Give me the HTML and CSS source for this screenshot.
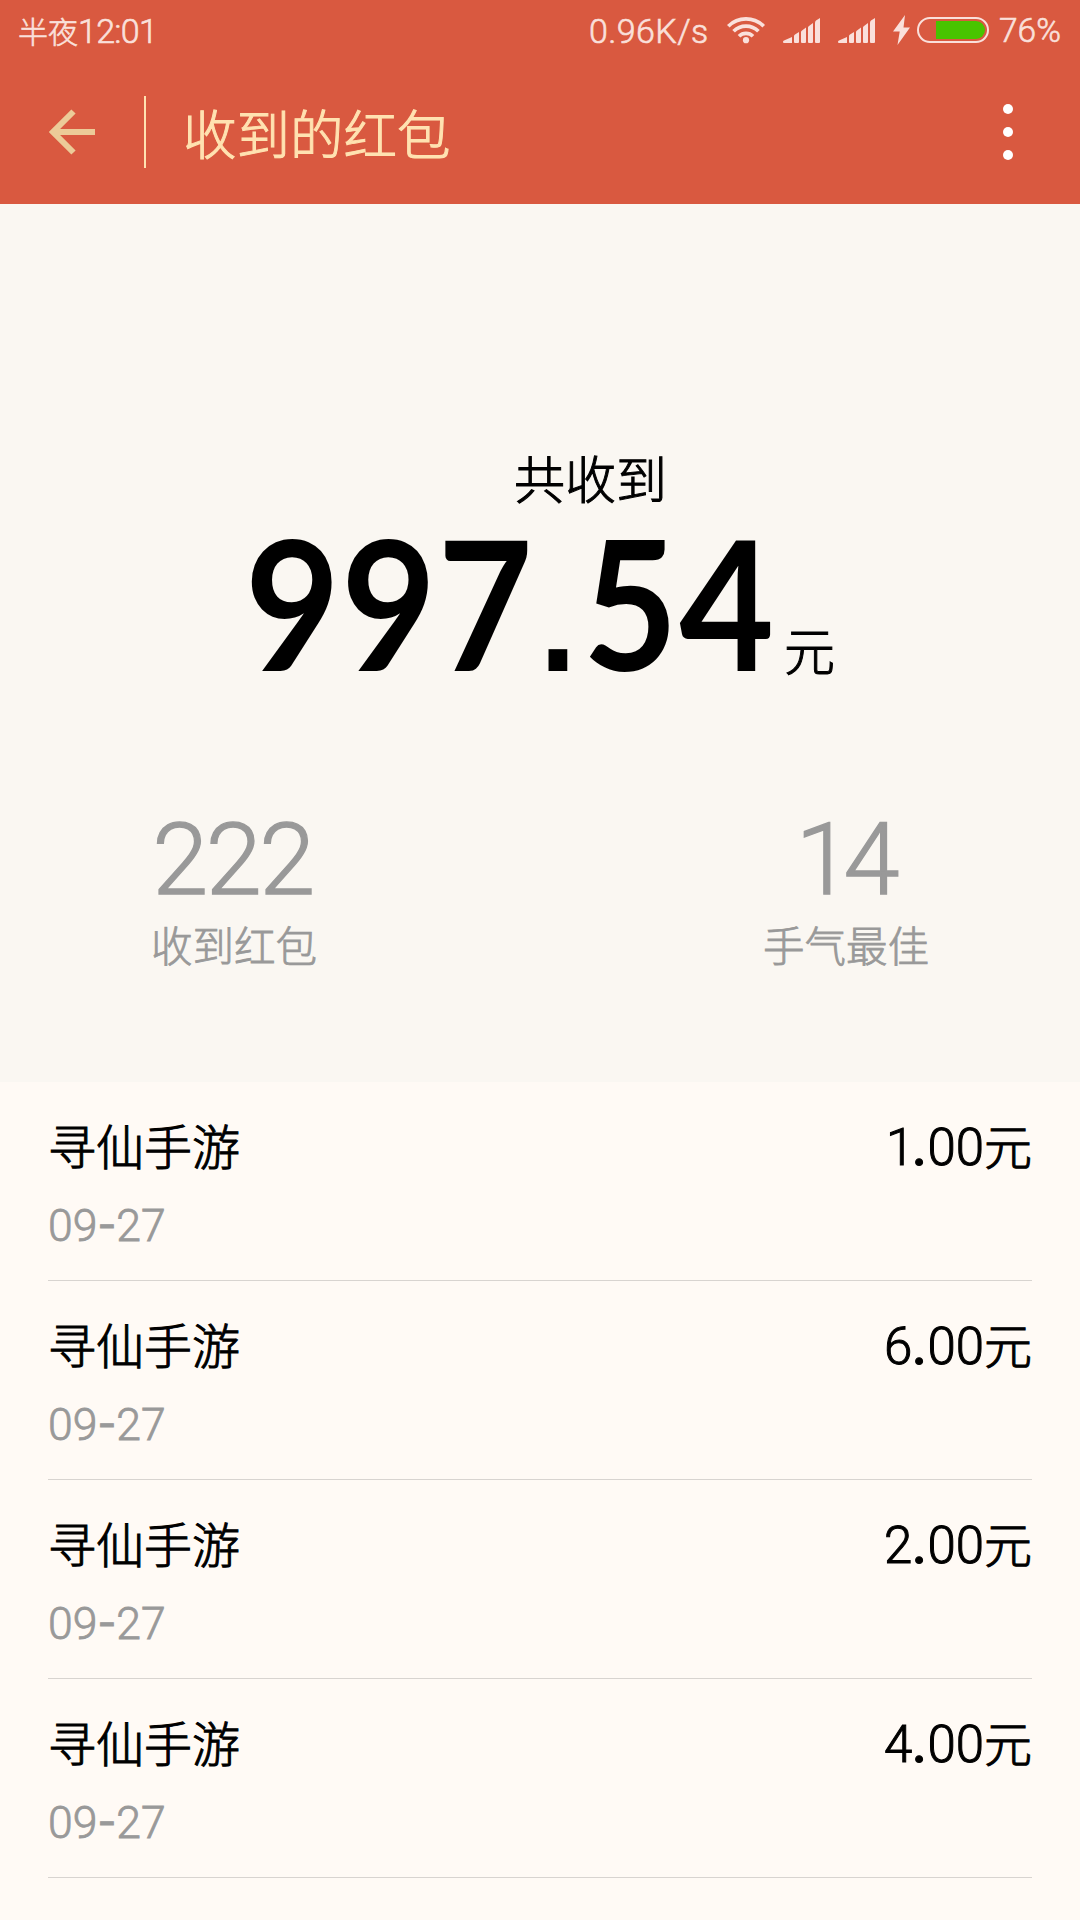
FILE: index.html
```
<!DOCTYPE html>
<html lang="zh-CN">
<head>
<meta charset="utf-8">
<title>收到的红包</title>
<link rel="stylesheet" href="styles.css">
</head>
<body>
<header class="top">
  <div class="status">
    <div class="clock">半夜<span class="clock-digits">12:01</span></div>
    <div class="speed">0.96K/s</div>
    <svg class="wifi" width="38" height="28" viewBox="0 0 38 28" fill="none" stroke="currentColor" stroke-width="3.7">
      <path d="M1.3 10.2a25 25 0 0 1 35.4 0M6.600 15.200a17.500 17.500 0 0 1 24.800 0M12 20.200a10 10 0 0 1 14 0"/>
      <circle cx="19" cy="24.2" r="3.1" fill="currentColor" stroke="none"/>
    </svg>
    <svg class="signal signal-one" width="37" height="25" viewBox="0 0 37 25" fill="currentColor"><path d="M0 24q0-1 1-1.400L9 19v6H1q-1 0-1-1zM11 18q0-1 1-1.500L16 14v10q0 1-1 1h-3q-1 0-1-1zM18 14q0-1 1-1.500L23 9.500v14.500q0 1-1 1h-3q-1 0-1-1zM25 9.500q0-1 1-1.600L30 5v19q0 1-1 1h-3q-1 0-1-1zM32 5q0-2 1-2.600L37 0v24q0 1-1 1h-3q-1 0-1-1z"/></svg>
    <svg class="signal signal-two" width="37" height="25" viewBox="0 0 37 25" fill="currentColor"><path d="M0 24q0-1 1-1.400L9 19v6H1q-1 0-1-1zM11 18q0-1 1-1.500L16 14v10q0 1-1 1h-3q-1 0-1-1zM18 14q0-1 1-1.500L23 9.500v14.500q0 1-1 1h-3q-1 0-1-1zM25 9.500q0-1 1-1.600L30 5v19q0 1-1 1h-3q-1 0-1-1zM32 5q0-2 1-2.600L37 0v24q0 1-1 1h-3q-1 0-1-1z"/></svg>
    <svg class="bolt" width="17" height="30" viewBox="0 0 17 30" fill="currentColor"><path d="M12 0L0 16.500h6.700L4.500 30 17 12.500h-6.500z"/></svg>
    <svg class="battery" width="72" height="26" viewBox="0 0 72 26">
      <rect x="1" y="1" width="70" height="24" rx="12" fill="none" stroke="currentColor" stroke-width="2"/>
      <path d="M19 4h40a9 9 0 0 1 0 18H19z" fill="#48c400"/>
    </svg>
    <div class="percent">76%</div>
  </div>
  <nav class="bar">
    <svg class="back" width="46" height="46" viewBox="0 0 46 46" fill="none" stroke="currentColor" stroke-width="6"><path d="M24.500 2.500L4 23l20.500 20.500M4.500 23H46"/></svg>
    <span class="rule"></span>
    <h1 class="title">收到的红包</h1>
    <svg class="more" width="10" height="56" viewBox="0 0 10 56" fill="#fff"><circle cx="5" cy="5" r="5"/><circle cx="5" cy="28" r="5"/><circle cx="5" cy="51" r="5"/></svg>
  </nav>
</header>
<section class="summary">
  <p class="total-label">共收到</p>
  <p class="total"><span class="amount">997<span class="point">.</span>54</span><span class="unit">元</span></p>
  <div class="stats">
    <div class="stat"><span class="count">222</span><span class="caption">收到红包</span></div>
    <div class="stat"><span class="count count-best">14</span><span class="caption">手气最佳</span></div>
  </div>
</section>
<ul class="list">
  <li class="item"><div class="row"><div class="line"><span class="name">寻仙手游</span><span class="price"><span class="one">1</span><span class="dot">.</span>00<span class="yuan">元</span></span></div><div class="date">09<span class="dash">-</span>27</div></div></li>
  <li class="item"><div class="row"><div class="line"><span class="name">寻仙手游</span><span class="price">6<span class="dot">.</span>00<span class="yuan">元</span></span></div><div class="date">09<span class="dash">-</span>27</div></div></li>
  <li class="item"><div class="row"><div class="line"><span class="name">寻仙手游</span><span class="price">2<span class="dot">.</span>00<span class="yuan">元</span></span></div><div class="date">09<span class="dash">-</span>27</div></div></li>
  <li class="item"><div class="row"><div class="line"><span class="name">寻仙手游</span><span class="price">4<span class="dot">.</span>00<span class="yuan">元</span></span></div><div class="date">09<span class="dash">-</span>27</div></div></li>
</ul>
</body>
</html>
```
FILE: styles.css
```
* { box-sizing: border-box; margin: 0; padding: 0; }
body {
  height: 1920px;
  overflow: hidden;
  background: #fffaf5;
  color: #000;
  font-family: Roboto, "Noto Sans CJK SC", sans-serif;
  font-weight: 300;
  -webkit-text-stroke: 0.8px currentColor;
}
svg { display: block; flex: none; }

.top { height: 204px; background: #d95940; }
.status {
  display: flex;
  height: 60px;
  padding-left: 18px;
  color: #fae0db;
  font-size: 30px;
  line-height: 62px;
  white-space: nowrap;
  -webkit-text-stroke-width: 0.6px;
}
.clock { width: 571px; }
.clock-digits, .speed, .percent { font-size: 34px; }
.clock-digits { letter-spacing: -0.700px; }
.speed { width: 138px; letter-spacing: 0.400px; }
.wifi { margin-top: 16px; }
.signal { margin-top: 18px; }
.signal-one { margin-left: 18px; }
.signal-two { margin-left: 18px; }
.bolt { margin: 15px 0 0 18px; }
.battery { margin: 17px 0 0 7px; }
.percent { margin-left: 10px; font-size: 33.500px; }

.bar { display: flex; align-items: center; height: 144px; padding: 0 67px 0 49px; }
.back { color: #eccb98; }
.rule { width: 2px; height: 72px; margin-left: 49px; background: #ffe2b1; }
.title { margin-left: 37px; padding-top: 9px; color: #ffe2b1; font-size: 53.500px; font-weight: 300; line-height: 72px; -webkit-text-stroke-width: 1px; }
.more { margin-left: auto; }

.summary { height: 878px; padding-top: 248px; background: #faf7f2; }
.total-label { padding-left: 514px; font-size: 51px; line-height: 60px; -webkit-text-stroke-width: 1px; }
.total { display: flex; align-items: baseline; height: 180px; margin-top: -1px; padding-left: 245px; line-height: 180px; }
.amount {
  width: 539px;
  font-family: Lato, sans-serif;
  font-size: 180px;
  font-weight: 700;
  letter-spacing: 1.500px;
  white-space: nowrap;
  transform: scaleX(0.91);
  transform-origin: left;
  -webkit-text-stroke-width: 0;
}
.point { margin: 0 7px 0 6px; font-family: "Liberation Sans", sans-serif; font-size: 146px; line-height: 1; letter-spacing: 0; }
.unit { font-size: 51px; -webkit-text-stroke-width: 1px; }
.stats { display: flex; justify-content: space-between; margin-top: 114px; padding: 0 150px; }
.stat { display: flex; flex-direction: column; align-items: center; width: 168px; color: #999; }
.count { padding-right: 3px; font-size: 101px; line-height: 110px; letter-spacing: -2.500px; -webkit-text-stroke-width: 1.300px; }
.count-best { padding-right: 5px; letter-spacing: -8px; }
.caption { font-size: 41.500px; line-height: 60px; margin-top: 3px; }

.list { list-style: none; }
.item { height: 199px; padding: 0 48px; }
.row { height: 199px; padding-top: 31px; border-bottom: 1px solid #d8d4d0; }
.line { display: flex; justify-content: space-between; align-items: baseline; font-size: 48px; line-height: 70px; -webkit-text-stroke-width: 1px; }
.price { font-size: 51px; }
.one { letter-spacing: -5px; margin-right: 3px; }
.dot { margin-right: 1px; font-weight: 500; }
.yuan { font-size: 48px; }
.date { margin-top: 6px; color: #999; font-size: 44.500px; line-height: 72px; }
.dash { font-family: Inter, sans-serif; font-size: 41px; font-weight: 400; line-height: 1; vertical-align: 2px; }
```
